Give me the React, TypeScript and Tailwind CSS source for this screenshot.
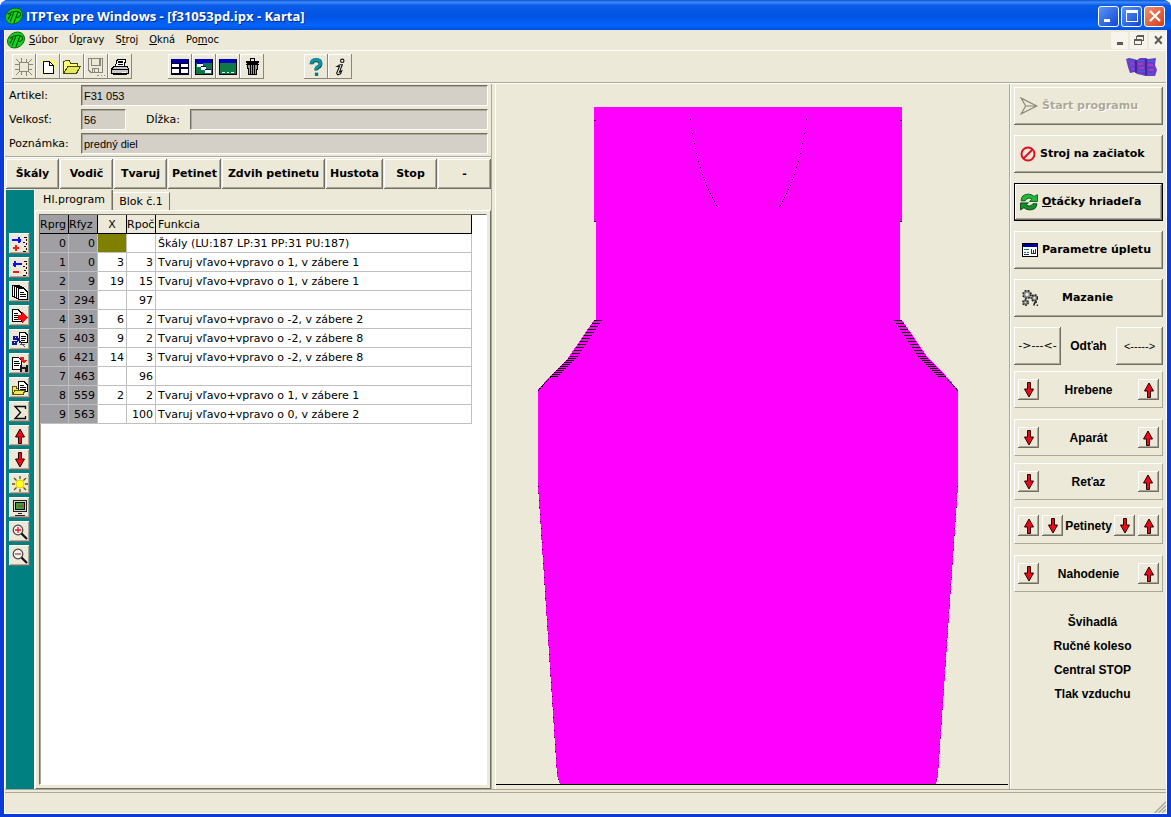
import React from "react";

const raised =
  "bg-[#ece9d8] shadow-[inset_-1px_-1px_0_#716f64,inset_1px_1px_0_#ffffff,inset_-2px_-2px_0_#aca899]";
const thin = "bg-[#ece9d8] shadow-[inset_-1px_-1px_0_#8a8778,inset_1px_1px_0_#ffffff]";
const sunken =
  "border border-t-[#716f64] border-l-[#716f64] border-r-white border-b-white bg-[#d4d0c8] shadow-[inset_1px_1px_0_#aca899]";

interface IconProps {
  children: React.ReactNode;
  size?: string;
  smooth?: boolean;
}

// All the small pictures share a 16 unit grid
const Icon = ({ children, size = "h-4 w-4", smooth = false }: IconProps) => (
  <svg
    viewBox="0 0 16 16"
    className={`${size} shrink-0`}
    fill="none"
    shapeRendering={smooth ? "auto" : "crispEdges"}
    aria-hidden="true"
  >
    {children}
  </svg>
);

const Logo = () => (
  <Icon size="h-[18px] w-[18px]" smooth>
    <ellipse cx="8" cy="8" rx="8" ry="6.600" transform="rotate(-35 8 8)" fill="#10d818" stroke="#0a6010" strokeWidth=".8" />
    <path d="M2.500 6.500Q7 3 12.500 4M8 4.500L4.500 13M11.500 4.500L8 14M11.500 4.500Q15 5 13.500 7.500T10.500 9M5.500 6L2.500 11" stroke="#064a10" />
  </Icon>
);

const ArrowUp = () => (
  <Icon smooth>
    <path d="M8 1L12.500 9H9.500V15.500H6.500V9H3.500Z" fill="#f00818" stroke="#200000" />
  </Icon>
);

const ArrowDown = () => (
  <Icon smooth>
    <path d="M8 15L12.500 7H9.500V.5H6.500V7H3.500Z" fill="#f00818" stroke="#200000" />
  </Icon>
);

const Magnifier = ({ plus = false }: { plus?: boolean }) => (
  <Icon smooth>
    <circle cx="6" cy="6" r="4.800" fill="#f4f2ea" stroke="#444" strokeWidth="1.200" />
    <path d="M9.500 9.500L15 15" stroke="#111" strokeWidth="2.200" />
    <path d={plus ? "M3 6H9M6 3V9" : "M3 6H9"} stroke={plus ? "#f01030" : "#a05060"} strokeWidth="1.300" />
  </Icon>
);

const fileTools = [
  {
    name: "Spojenie",
    icon: (
      <Icon size="h-[18px] w-[18px]">
        <path d="M4 4H12V12H4ZM1 1L4 4M15 1L12 4M1 15L4 12M15 15L12 12M6 0V4M10 1V4M6 12V15M10 12V16M0 6H4M12 6H16M0 10H4M12 10H15" stroke="#8a8778" />
      </Icon>
    ),
  },
  {
    name: "Nový",
    icon: (
      <Icon>
        <path d="M10 1L15 3L13 7L15 9M2 3L4 1M2 14L4 15" stroke="#ffff40" strokeWidth="2" />
        <path d="M3.500 2.500H9.500L13.500 6.500V14.500H3.500Z" fill="#fff" stroke="#000" />
        <path d="M9.500 2.500V6.500H13.500" stroke="#000" />
      </Icon>
    ),
  },
  {
    name: "Otvoriť",
    icon: (
      <Icon size="h-[18px] w-[18px]">
        <path d="M.5 13.500V3.500L2 2.500H5.500L7 4.500H12.500V7.500" fill="#ffff80" stroke="#4a4a00" />
        <path d="M.5 13.500L4.500 7.500H15.500L12 13.500Z" fill="#e8e860" stroke="#4a4a00" />
      </Icon>
    ),
  },
  {
    name: "Uložiť",
    icon: (
      <Icon size="h-[18px] w-[18px]">
        <path d="M1.500 .5H13.500V12.500H3L1.500 11ZM4 .5V6.500H11.500V.5M4.500 12V9H10.500V12M6.500 10V12" stroke="#8a8778" />
        <path d="M9 15.500H10.500M12 15.500H13.500M15 15.500H16" stroke="#8a8778" />
      </Icon>
    ),
  },
  {
    name: "Tlačiť",
    icon: (
      <Icon size="h-[18px] w-[18px]">
        <path d="M3.500 8.500L5.500 1.500H13L11.500 8.500Z" fill="#fff" stroke="#000" />
        <path d="M6.500 3.500H11M6 5.500H10.500" stroke="#000" />
        <path d="M.5 9.500L3 7.500H14L15.500 9.500V13.500H.5Z" fill="#c8c8c8" stroke="#000" />
        <path d="M1 10.500H15M2 14.500H14" stroke="#000" />
        <path d="M10 12.500H13" stroke="#fff" />
      </Icon>
    ),
  },
];

const windowTools = [
  {
    name: "Dlaždice",
    icon: (
      <Icon size="h-[18px] w-[18px]">
        <path d="M0 1H16V15H0Z" fill="#000030" />
        <path d="M1 1H15V4H1Z" fill="#0000a8" />
        <path d="M1 5H7V8H1ZM9 5H15V8H9ZM1 10H7V13H1ZM9 10H15V13H9Z" fill="#fff" />
      </Icon>
    ),
  },
  {
    name: "Kaskáda",
    icon: (
      <Icon size="h-[18px] w-[18px]">
        <path d="M.5 1.500H15.500V14.500H.5Z" fill="#107848" stroke="#000" />
        <path d="M1 1H15V4H1Z" fill="#0000c0" />
        <path d="M2 5H7V8H2ZM5 7.500H10V10.500H5ZM9 10H14V13H9Z" fill="#fff" />
        <path d="M2 5H7M5 7.500H10M9 10H14" stroke="#000080" />
      </Icon>
    ),
  },
  {
    name: "Ikony",
    icon: (
      <Icon size="h-[18px] w-[18px]">
        <path d="M.5 1.500H15.500V14.500H.5Z" fill="#107848" stroke="#000" />
        <path d="M1 1H15V4H1Z" fill="#0000c0" />
        <path d="M3 12H5V13H3ZM7 12H9V13H7ZM11 12H13V13H11Z" fill="#d8f0e0" />
      </Icon>
    ),
  },
  {
    name: "Zmazať",
    icon: (
      <Icon size="h-[18px] w-[18px]">
        <path d="M6.500 2.500V.5H10.500V2.500M3 3.500H14" stroke="#000" />
        <path d="M4 5H13L12 15H5Z" fill="#999" stroke="#000" />
        <path d="M6.500 5V15M8.500 5V15M10.500 5V15M3 5.500H14" stroke="#000" />
      </Icon>
    ),
  },
];

const helpTools = [
  {
    name: "Pomocník",
    icon: (
      <Icon size="h-[18px] w-[18px]" smooth>
        <path d="M4 5.500Q4 2 8 2T12 5Q12 7 10 8T8.500 11" stroke="#004048" strokeWidth="3.400" />
        <path d="M4 5Q4 1.500 8 1.500T12 4.500Q12 6.500 10 7.500T8 10.500" stroke="#0898a8" strokeWidth="2.600" />
        <path d="M7 13H10V16H7Z" fill="#087888" />
      </Icon>
    ),
  },
  {
    name: "Informácie",
    icon: (
      <Icon size="h-[18px] w-[18px]" smooth>
        <circle cx="10" cy="2.500" r="1.500" fill="#fff" stroke="#111" />
        <path d="M5.500 7.500L8 6H10L7.500 12.500L9.500 11.500L8.500 14L6 15L5 13.500L7.500 7.500Z" fill="#fff" stroke="#111" />
      </Icon>
    ),
  },
];

const editTools = [
  {
    name: "Vložiť riadok",
    icon: (
      <Icon>
        <path d="M0 4H9M7 1V7M8 2.500V5.500" stroke="#1010f0" strokeWidth="2" />
        <path d="M1 12H7M4 9V15" stroke="#f01818" strokeWidth="2" />
        <path d="M12 1H15M14.500 3V5M11 6H13M14.500 7V9M12 10.500H14M14.500 12V14M11 15H14" stroke="#200000" />
      </Icon>
    ),
  },
  {
    name: "Odstrániť riadok",
    icon: (
      <Icon>
        <path d="M1 4H10M3 1V7M2 2.500V5.500" stroke="#1010f0" strokeWidth="2" />
        <path d="M1 12H7" stroke="#f01818" strokeWidth="2" />
        <path d="M12 1H15M14.500 3V5M11 6H13M14.500 7V9M12 10.500H14M14.500 12V14M11 15H14" stroke="#200000" />
      </Icon>
    ),
  },
  {
    name: "Kopírovať všetko",
    icon: (
      <Icon>
        <path d="M.5 1.500H7.500V12.500H.5Z" fill="#fff" stroke="#000" />
        <path d="M2.500 2.500H9.500V13.500H2.500Z" fill="#fff" stroke="#000" />
        <path d="M4.500 3.500H11.500V14.500H4.500Z" fill="#fff" stroke="#000" />
        <path d="M6.500 4.500H12L15.500 8V15.500H6.500Z" fill="#fff" stroke="#000" />
        <path d="M8 8.500H12M8 10.500H14M8 12.500H14" stroke="#000" />
      </Icon>
    ),
  },
  {
    name: "Presunúť",
    icon: (
      <Icon>
        <path d="M.5 1.500H6L9.500 5V13.500H.5Z" fill="#fff" stroke="#000" />
        <path d="M2 5.500H6M2 7.500H7M2 9.500H6M2 11.500H6" stroke="#000" />
        <path d="M6 7H10V4L16 9.500L10 15V12H6Z" fill="#f01010" />
      </Icon>
    ),
  },
  {
    name: "Vystrihnúť",
    icon: (
      <Icon>
        <path d="M7.500 .5H13L15.500 3V10.500H7.500Z" fill="#fff" stroke="#000" />
        <path d="M9 4.500H14M9 6.500H14M9 8.500H13" stroke="#000" />
        <path d="M2 4.500H5V7H2ZM1 9.500H4V12H1ZM5 5L8 10M4 10L8 7" stroke="#1018a0" strokeWidth="1.500" />
        <path d="M8 10L13 15M8 12.500H13" stroke="#555" />
      </Icon>
    ),
  },
  {
    name: "Uložiť blok",
    icon: (
      <Icon>
        <path d="M.5 1.500H6L9.500 4V13.500H.5Z" fill="#fff" stroke="#000" />
        <path d="M2 5.500H7M2 7.500H8M2 9.500H7" stroke="#000" />
        <path d="M8 1H12V4H15L12 8L8 4H10L8 3Z" fill="#f01818" />
        <path d="M8 9H16V16H8Z" fill="#181818" />
        <path d="M10 9H14V11H10ZM10 13H13V16H10Z" fill="#c8c8c8" />
      </Icon>
    ),
  },
  {
    name: "Načítať blok",
    icon: (
      <Icon>
        <path d="M.5 14.500V6.500H4.500V8H12L9.500 14.500Z" fill="#f0e860" stroke="#605800" />
        <path d="M6.500 1.500H12L15.500 5V11.500H6.500Z" fill="#fff" stroke="#000" />
        <path d="M8 5.500H12M8 7.500H14M8 9.500H14" stroke="#000" />
        <path d="M1 14L3 10.500H13L11 14.500Z" fill="#f0e860" stroke="#605800" />
      </Icon>
    ),
  },
  {
    name: "Súčet",
    icon: (
      <Icon smooth>
        <path d="M13.500 5V2.500H3L8.500 8.500L3 14.500H13.500V12" stroke="#000" strokeWidth="1.300" />
      </Icon>
    ),
  },
  { name: "Nahor", icon: <ArrowUp /> },
  { name: "Nadol", icon: <ArrowDown /> },
  {
    name: "Svetlo",
    icon: (
      <Icon smooth>
        <path d="M8 0V3M8 13V16M0 8H3M13 8H16M2 2L4.500 4.500M14 2L11.500 4.500M2 14L4.500 11.500M14 14L11.500 11.500" stroke="#605400" strokeWidth="1.300" />
        <circle cx="8" cy="8" r="4" fill="#ffff20" stroke="#e8d000" />
      </Icon>
    ),
  },
  {
    name: "Monitor",
    icon: (
      <Icon>
        <path d="M1.500 .5H14.500V11.500H1.500Z" fill="#d8d4c8" stroke="#222" />
        <path d="M3.500 2.500H12.500V9.500H3.500Z" fill="#28a838" stroke="#000" />
        <path d="M6 5H8V7H6ZM9 5H11V7H9Z" fill="#f02020" />
        <path d="M6 13.500H10M3 15.500H13" stroke="#222" />
      </Icon>
    ),
  },
  { name: "Priblížiť", icon: <Magnifier plus /> },
  { name: "Oddialiť", icon: <Magnifier /> },
];

const steps = [
  { label: "Škály", width: "w-[53px]" },
  { label: "Vodič", width: "w-[53px]" },
  { label: "Tvaruj", width: "w-[53px]" },
  { label: "Petinet", width: "w-[53px]" },
  { label: "Zdvih petinetu", width: "w-[103px]" },
  { label: "Hustota", width: "w-[57px]" },
  { label: "Stop", width: "w-[53px]" },
  { label: "-", width: "w-[53px]" },
];

const rows = [
  ["0", "0", "", "", "Škály (LU:187 LP:31 PP:31 PU:187)"],
  ["1", "0", "3", "3", "Tvaruj vľavo+vpravo o 1, v zábere 1"],
  ["2", "9", "19", "15", "Tvaruj vľavo+vpravo o 1, v zábere 1"],
  ["3", "294", "", "97", ""],
  ["4", "391", "6", "2", "Tvaruj vľavo+vpravo o -2, v zábere 2"],
  ["5", "403", "9", "2", "Tvaruj vľavo+vpravo o -2, v zábere 8"],
  ["6", "421", "14", "3", "Tvaruj vľavo+vpravo o -2, v zábere 8"],
  ["7", "463", "", "96", ""],
  ["8", "559", "2", "2", "Tvaruj vľavo+vpravo o 1, v zábere 1"],
  ["9", "563", "", "100", "Tvaruj vľavo+vpravo o 0, v zábere 2"],
];

const statuses = ["Švihadlá", "Ručné koleso", "Central STOP", "Tlak vzduchu"];

interface Tool {
  name: string;
  icon: React.ReactNode;
}

const ToolGroup = ({ tools }: { tools: Tool[] }) => (
  <div className="flex">
    {tools.map((tool) => (
      <button key={tool.name} type="button" aria-label={tool.name} className={`flex h-[25px] w-6 items-center justify-center ${thin}`}>
        {tool.icon}
      </button>
    ))}
  </div>
);

const ArrowButton = ({ up = false, label }: { up?: boolean; label: string }) => (
  <button type="button" aria-label={label} className={`flex h-[21px] w-[21px] shrink-0 items-center justify-center ${raised}`}>
    {up ? <ArrowUp /> : <ArrowDown />}
  </button>
);

const MoveBox = ({ label, double = false }: { label: string; double?: boolean }) => (
  <div className="flex h-[37px] items-center justify-between border border-t-white border-r-[#aca899] border-b-[#aca899] border-l-white px-[3px] font-['Liberation_Sans',sans-serif] text-[12px] font-bold">
    <div className="flex gap-[3px]">
      <ArrowButton up={double} label={`${label} vľavo`} />
      {double && <ArrowButton label={`${label} vľavo dole`} />}
    </div>
    <span>{label}</span>
    <div className="flex gap-[3px]">
      {double && <ArrowButton label={`${label} vpravo dole`} />}
      <ArrowButton up label={`${label} vpravo`} />
    </div>
  </div>
);

// Decrease marks along the armhole: every 3rd row first, then every 2nd
const marks: [number, number][] = [];
for (let i = 0; i < 13; i++) marks.push([98 - i * 2, 236 + i * 3]);
for (let i = 0; i < 10; i++) marks.push([72 - i * 2, 274 + i * 2]);

const neck: [number, number][] = [
  [194, 35], [195, 44], [196, 49], [197, 54], [198, 59], [199, 64], [200, 69], [201, 73], [202, 77],
  [203, 80], [204, 83], [205, 86], [206, 90], [207, 93], [208, 95], [209, 98], [210, 101], [211, 103],
  [212, 105], [213, 107], [214, 109], [215, 111], [216, 113], [217, 115], [218, 117], [219, 119], [220, 121], [221, 122],
];

const Garment = () => (
  <svg viewBox="0 0 512 700" preserveAspectRatio="xMidYMax meet" className="h-full w-full" fill="none" shapeRendering="crispEdges" role="img" aria-label="predný diel">
    <path
      d="M98 23H406V137L404 138V236H406L432 274L450 292L462 306V402L442 692L440 700H64L61 692L42 402V306L54 292L72 274L98 236H100V138L98 137Z"
      fill="#ff00ff"
    />
    <g fill="#000">
      {marks.map(([x, y]) => (
        <React.Fragment key={y}>
          <rect x={x} y={y} width="8" height="1" />
          <rect x={504 - x - 8} y={y} width="8" height="1" />
        </React.Fragment>
      ))}
      {neck.map(([x, y]) => (
        <React.Fragment key={y}>
          <rect x={x} y={y} width="1" height="1" />
          <rect x={504 - x} y={y} width="1" height="1" />
        </React.Fragment>
      ))}
    </g>
    <path d="M55 293L42 306.500M449 293L462 306.500" stroke="#000" strokeDasharray="2 1" />
    <path d="M42.500 402L61.500 692L64 700M461.500 402L441.500 692L440 700" stroke="#000" strokeDasharray="1 6" />
    <path d="M98 36H100M98 137H100M404 137H406M404 36H406" stroke="#000" />
  </svg>
);

const captionButton =
  "flex h-[21px] w-[21px] items-center justify-center rounded-[3px] border border-white";

const actionButton = `flex h-[38px] w-full shrink-0 items-center pl-1.5 pr-1 text-[11px] font-bold whitespace-nowrap`;

export default function App() {
  return (
    <div className="flex min-h-screen flex-col rounded-t-lg bg-[#0a3ad8] font-['DejaVu_Sans',Verdana,sans-serif] text-[11px] leading-[14px] text-black">
      {/* Caption */}
      <header className="flex h-[30px] items-center justify-between rounded-t-lg bg-[linear-gradient(to_bottom,#0a50d8_0%,#3c8cf8_7%,#0a5ce8_18%,#0054e4_55%,#0464fc_85%,#0050d8_100%)] pr-1.5 pl-[5px]">
        <div className="flex items-center gap-[3px] pt-0.5">
          <Logo />
          <h1 className="font-['Open_Sans','Noto_Sans',sans-serif] text-[13px] font-bold whitespace-nowrap text-white [text-shadow:1px_1px_0_#0a2a80]">
            ITPTex pre Windows - [f31053pd.ipx - Karta]
          </h1>
        </div>
        <div className="flex gap-0.5 pt-0.5">
          <button type="button" aria-label="Minimalizovať" className={`${captionButton} bg-gradient-to-br from-[#5a94f8] to-[#1444d0]`}>
            <Icon><path d="M3 11H9V14H3Z" fill="#fff" /></Icon>
          </button>
          <button type="button" aria-label="Maximalizovať" className={`${captionButton} bg-gradient-to-br from-[#5a94f8] to-[#1444d0]`}>
            <Icon><path d="M2 2H14V14H2ZM3 5V13H13V5Z" fill="#fff" fillRule="evenodd" /></Icon>
          </button>
          <button type="button" aria-label="Zavrieť" className={`${captionButton} bg-gradient-to-br from-[#f09070] to-[#d03810]`}>
            <Icon smooth><path d="M3 3L13 13M13 3L3 13" stroke="#fff" strokeWidth="2.200" /></Icon>
          </button>
        </div>
      </header>

      <div className="mx-1 mb-1 flex flex-1 flex-col border-x border-b border-white bg-[#ece9d8]">
        {/* Menu */}
        <div className="flex h-[21px] items-center justify-between border-b border-white pl-0.5">
          <nav className="flex items-center font-['DejaVu_Sans_Condensed','DejaVu_Sans',sans-serif]">
            <Logo />
            <div className="flex gap-[11px] pl-1">
              <button type="button"><u>S</u>úbor</button>
              <button type="button">Ú<u>p</u>ravy</button>
              <button type="button">S<u>t</u>roj</button>
              <button type="button"><u>O</u>kná</button>
              <button type="button">Po<u>m</u>oc</button>
            </div>
          </nav>
          <div className="flex gap-0.5">
            <button type="button" aria-label="Minimalizovať kartu" className="flex h-[17px] w-[17px] items-center justify-center bg-[#f6f4ec]">
              <Icon size="h-3 w-3"><path d="M4 11H12V14H4Z" fill="#5c5a50" /></Icon>
            </button>
            <button type="button" aria-label="Obnoviť kartu" className="flex h-[17px] w-[17px] items-center justify-center bg-[#f6f4ec]">
              <Icon size="h-3 w-3"><path d="M5 6V2H14V9H11M5 3H14M2 7H11V14H2ZM2 8H11" stroke="#5c5a50" strokeWidth="1.300" /></Icon>
            </button>
            <button type="button" aria-label="Zavrieť kartu" className="flex h-[17px] w-[17px] items-center justify-center bg-[#f6f4ec]">
              <Icon size="h-3 w-3" smooth><path d="M4 3L13 13M13 3L4 13" stroke="#5c5a50" strokeWidth="2.500" /></Icon>
            </button>
          </div>
        </div>

        {/* Toolbar */}
        <div className="flex h-8 items-center justify-between border-b border-[#aca899] pr-[9px] pl-[7px]">
          <div className="flex">
            <ToolGroup tools={fileTools} />
            <div className="pl-9"><ToolGroup tools={windowTools} /></div>
            <div className="pl-10"><ToolGroup tools={helpTools} /></div>
          </div>
          <svg viewBox="0 0 32 22" className="h-[22px] w-8" aria-hidden="true">
            <path d="M1 3L4 2L9 3L12 4L15 2L21 2L23 3L31 2L30 9L32 14L30 20H20L17 19L12 18L10 16L5 17L3 11Z" fill="#6a3ac8" />
            <path d="M2 5H9M4 10H9M13 5H19M13 15H20M23 5H30M23 18H29" stroke="#4858d0" strokeWidth="2" />
            <path d="M5 7.500H9M6 13H9M13 8H18M14 12H19M23 9H28M24 14H29" stroke="#a83cc0" strokeWidth="2" />
            <path d="M11 4V17M21 3V19" stroke="#402080" strokeWidth="1.500" />
          </svg>
        </div>

        <main className="flex flex-1 border-t border-b border-t-white border-b-[#aca899]">
          {/* Program */}
          <section className="flex w-[487px] shrink-0 flex-col border-r border-[#aca899]">
            <form className="flex flex-col gap-[3px] border-b border-[#aca899] pt-px pr-[3px] pb-0.5 pl-1">
              <div className="flex items-center">
                <label htmlFor="artikel" className="w-[72px]">Artikel:</label>
                <input id="artikel" defaultValue="F31 053" className={`h-[21px] min-w-0 flex-1 px-0.5 font-['Liberation_Sans',sans-serif] ${sunken}`} />
              </div>
              <div className="flex items-center">
                <label htmlFor="velkost" className="w-[72px]">Velkosť:</label>
                <input id="velkost" defaultValue="56" className={`h-[21px] w-[45px] px-0.5 font-['Liberation_Sans',sans-serif] ${sunken}`} />
                <label htmlFor="dlzka" className="w-16 pl-5">Dĺžka:</label>
                <input id="dlzka" className={`h-[21px] min-w-0 flex-1 px-0.5 font-['Liberation_Sans',sans-serif] ${sunken}`} />
              </div>
              <div className="flex items-center">
                <label htmlFor="poznamka" className="w-[72px]">Poznámka:</label>
                <input id="poznamka" defaultValue="predný diel" className={`h-[21px] min-w-0 flex-1 px-0.5 font-['Liberation_Sans',sans-serif] ${sunken}`} />
              </div>
            </form>
            <div className="flex gap-px border-t border-white pt-px pb-px pl-px">
              {steps.map((step) => (
                <button key={step.label} type="button" className={`h-[30px] shrink-0 font-bold whitespace-nowrap ${step.width} ${raised}`}>
                  {step.label}
                </button>
              ))}
            </div>

            <div className="flex flex-1 pl-px">
              <div className="flex w-7 shrink-0 flex-col gap-[3px] bg-[#008080] pt-[43px] pl-[3px]">
                {editTools.map((tool) => (
                  <button key={tool.name} type="button" aria-label={tool.name} className={`flex h-[21px] w-[21px] items-center justify-center ${raised}`}>
                    {tool.icon}
                  </button>
                ))}
              </div>

              <div className="flex min-w-0 flex-1 flex-col border-l border-white">
                <div className="flex h-5 items-end pl-px" role="tablist">
                  <button type="button" role="tab" aria-selected="true" className="h-5 w-[77px] border-r border-[#716f64] text-center shadow-[inset_-1px_0_0_#aca899]">
                    Hl.program
                  </button>
                  <button type="button" role="tab" aria-selected="false" className="h-[18px] w-[57px] border-t border-r border-t-white border-r-[#716f64] text-center">
                    Blok č.1
                  </button>
                </div>
                <div className="flex flex-1 border border-t-white border-r-[#716f64] border-b-[#716f64] border-l-white p-[3px]">
                  <div className="flex-1 border border-t-[#716f64] border-r-white border-b-white border-l-[#716f64] bg-white shadow-[inset_1px_0_0_#aca899]">
                    <table className="w-[432px] table-fixed border-separate border-spacing-0">
                      <thead>
                        <tr className="h-[19px] text-left">
                          <th className="w-[29px] overflow-hidden border-r border-b border-black bg-[#a0a0a4] p-0 pt-px font-normal whitespace-nowrap">Rprg</th>
                          <th className="w-[29px] overflow-hidden border-r border-b border-black bg-[#a0a0a4] p-0 pt-px font-normal whitespace-nowrap">Rfyz</th>
                          <th className="w-[29px] border-r border-b border-black bg-[#ece9d8] p-0 pt-px text-center font-normal">X</th>
                          <th className="w-[29px] overflow-hidden border-r border-b border-black bg-[#ece9d8] p-0 pt-px font-normal whitespace-nowrap">Rpoč</th>
                          <th className="border-r border-b border-black bg-[#ece9d8] p-0 pt-px pl-0.5 font-normal">Funkcia</th>
                        </tr>
                      </thead>
                      <tbody>
                        {rows.map(([prg, fyz, x, count, fn], i) => (
                          <tr key={prg} className="h-[19px] text-right">
                            <td className="border-r border-b border-[#c0c0c0] bg-[#a0a0a4] p-0 pt-0.5 pr-0.5">{prg}</td>
                            <td className="border-r border-b border-[#c0c0c0] bg-[#a0a0a4] p-0 pt-0.5 pr-0.5">{fyz}</td>
                            <td className={`border-r border-b border-[#c0c0c0] p-0 pt-0.5 pr-0.5 ${i === 0 ? "bg-[#808000]" : ""}`}>{x}</td>
                            <td className="border-r border-b border-[#c0c0c0] p-0 pt-0.5 pr-0.5">{count}</td>
                            <td className="border-r border-b border-[#c0c0c0] p-0 pt-0.5 pl-0.5 text-left whitespace-nowrap">{fn}</td>
                          </tr>
                        ))}
                      </tbody>
                    </table>
                  </div>
                </div>
              </div>
            </div>
          </section>

          {/* Drawing of the knitted piece */}
          <section className="ml-[3px] min-w-0 flex-1 border-l border-white pr-px pb-1">
            <div className="h-full border-b border-black">
              <Garment />
            </div>
          </section>

          {/* Machine control */}
          <aside className="flex w-[157px] shrink-0 flex-col border-l border-[#aca899] pt-[3px] pr-[3px] pl-1 shadow-[inset_1px_0_0_#ffffff]">
            <div className="flex flex-col gap-2.5">
              <button type="button" disabled className={`${actionButton} gap-1 text-[#aca899] [text-shadow:1px_1px_0_#ffffff] ${raised}`}>
                <Icon size="h-[18px] w-[18px]" smooth><path d="M1 1L15 8L1 15L5 8ZM5 8H15" stroke="#8a8778" /></Icon>
                Štart programu
              </button>
              <button type="button" className={`${actionButton} gap-1 ${raised}`}>
                <Icon smooth><circle cx="8" cy="8" r="6.500" stroke="#e01020" strokeWidth="2" /><path d="M12.500 3.500L3.500 12.500" stroke="#e01020" strokeWidth="2" /></Icon>
                Stroj na začiatok
              </button>
              <button type="button" className={`${actionButton} gap-1 border border-black pl-[5px] ${raised}`}>
                <Icon size="h-[18px] w-[18px]" smooth>
                  <path d="M1 7Q1 1 7.500 1Q10.500 1 12.500 3L15.500 1.500V7.500H8.500L10.500 5.500Q7 3 4.500 7Z" fill="#20b838" stroke="#085818" strokeWidth=".8" />
                  <path d="M15 9.500Q15 15 8.500 15Q5.500 15 3.500 13L.5 15V8.800H7.500L5.500 10.500Q9 13 11.500 9.500Z" fill="#149028" stroke="#084018" strokeWidth=".8" />
                </Icon>
                <span><u>O</u>táčky hriadeľa</span>
              </button>
              <button type="button" className={`${actionButton} gap-1 pl-2 ${raised}`}>
                <Icon>
                  <path d="M.5 1.500H15.500V14.500H.5Z" fill="#fff" stroke="#000" />
                  <path d="M1 2H15V5H1Z" fill="#0000a0" />
                  <path d="M2 7.500H7M2 10.500H4M5 10.500H7" stroke="#088" />
                  <path d="M2 12.500H7M9.500 7V11.500H13.500V7M11.500 8V11" stroke="#402050" />
                </Icon>
                Parametre úpletu
              </button>
              <button type="button" className={`${actionButton} pl-2 ${raised}`}>
                <Icon smooth>
                  <circle cx="5" cy="4.500" r="3" stroke="#888" strokeWidth="2.500" />
                  <circle cx="5" cy="4.500" r="4" stroke="#222" strokeWidth="1.600" strokeDasharray="1.600 1.600" />
                  <circle cx="12.500" cy="8" r="2.200" stroke="#777" strokeWidth="2" />
                  <circle cx="12.500" cy="8" r="3.200" stroke="#222" strokeWidth="1.600" strokeDasharray="1.600 1.400" />
                  <circle cx="3.500" cy="12.500" r="1.800" stroke="#777" strokeWidth="2" />
                  <circle cx="3.500" cy="12.500" r="2.800" stroke="#222" strokeWidth="1.400" strokeDasharray="1.600 1.400" />
                  <path d="M15 12Q12 12 12 15.500M15.500 14.500V16" stroke="#222" strokeWidth="1.600" />
                </Icon>
                <span className="pl-6">Mazanie</span>
              </button>
              <div className="flex items-center justify-between">
                <button type="button" className={`h-[38px] w-[47px] whitespace-nowrap ${raised}`}>-&gt;---&lt;-</button>
                <span className="font-['Liberation_Sans',sans-serif] text-[12px] font-bold">Odťah</span>
                <button type="button" className={`h-[38px] w-[47px] font-['Liberation_Sans',sans-serif] whitespace-nowrap ${raised}`}>&lt;-----&gt;</button>
              </div>
            </div>
            <div className="flex flex-col gap-[11px] pt-1.5">
              <MoveBox label="Hrebene" />
              <MoveBox label="Aparát" />
            </div>
            <div className="flex flex-col gap-[7px] pt-[7px]">
              <MoveBox label="Reťaz" />
              <MoveBox label="Petinety" double />
            </div>
            <div className="pt-[11px]">
              <MoveBox label="Nahodenie" />
            </div>
            <ul className="pt-[18px] pl-2 text-center font-['Liberation_Sans',sans-serif] text-[12px] leading-6 font-bold">
              {statuses.map((status) => (
                <li key={status}>{status}</li>
              ))}
            </ul>
          </aside>
        </main>

        {/* Status bar */}
        <footer className="flex h-[23px] shrink-0 flex-col pt-0.5">
          <div className="flex flex-1 items-end justify-end border-t border-[#aca899]">
            <Icon size="h-3 w-3" smooth>
              <path d="M1 16L16 1M6 16L16 6M11 16L16 11" stroke="#aca899" strokeWidth="2" />
            </Icon>
          </div>
        </footer>
      </div>
    </div>
  );
}
